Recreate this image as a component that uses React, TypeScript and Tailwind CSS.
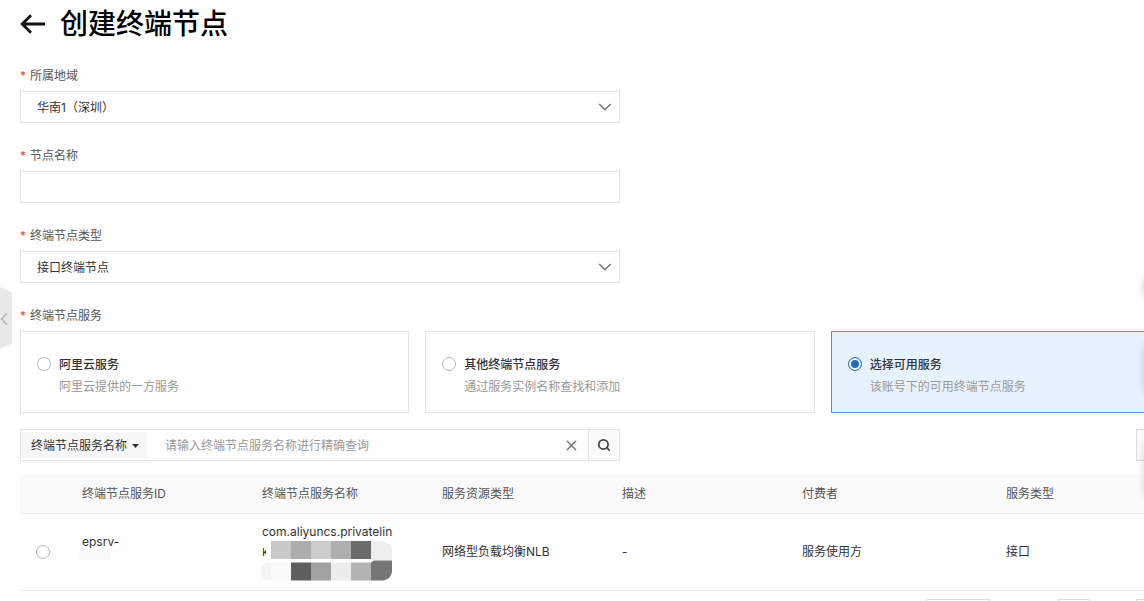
import React, { useState } from 'react';
import { Search, X } from 'lucide-react';

const services = [
    { id: 'aliyun', title: '阿里云服务', desc: '阿里云提供的一方服务' },
    { id: 'other', title: '其他终端节点服务', desc: '通过服务实例名称查找和添加' },
    { id: 'available', title: '选择可用服务', desc: '该账号下的可用终端节点服务' },
];

const radioClass = "appearance-none size-3.5 shrink-0 rounded-full border border-[#b5b5b5] bg-white checked:border-[#3a78c4] checked:bg-[#2468b8] checked:shadow-[inset_0_0_0_2px_#fff]";

function FieldLabel({ htmlFor, children }: { htmlFor?: string; children: React.ReactNode }) {
    return (
        <label htmlFor={htmlFor} className="flex h-5 items-center gap-1 text-[#555]">
            <span className="w-1.5 text-center text-[#c85050]">*</span>
            {children}
        </label>
    );
}

function SelectField({ id, label, option }: { id: string; label: string; option: string }) {
    return (
        <div className="flex flex-col gap-[5px]">
            <FieldLabel htmlFor={id}>{label}</FieldLabel>
            <div className="relative">
                <select id={id} className="block h-8 w-full appearance-none border border-[#e3e3e3] bg-white px-4 pt-0.5 text-[#333]">
                    <option>{option}</option>
                </select>
                <svg className="pointer-events-none absolute right-2 top-3 h-2 w-3.5" viewBox="0 0 14 8" fill="none" stroke="#777" strokeWidth="1.4">
                    <path d="M1.2 1 7 6.8 12.8 1" />
                </svg>
            </div>
        </div>
    );
}

// Pixelated cover over the private part of the service name
function Mosaic() {
    return (
        <svg className="absolute -left-0.5 top-[19px] h-10 w-33" viewBox="0 0 132 40">
            <path d="M2 0h9v7H2zM6 0h5v18H6z" fill="#fff" />
            <path d="M11 0h20v18H11z" fill="#c9c9c9" />
            <path d="M31 0h20v18H31z" fill="#adadad" />
            <path d="M51 0h20v18H51z" fill="#ccc" />
            <path d="M71 0h20v18H71z" fill="#afafaf" />
            <path d="M91 0h20v18H91z" fill="#6a6a6a" />
            <path d="M111 0h10q11 2 11 10v9h-21z" fill="#eee" />
            <path d="M11 21.500v18q-11 0-11-9t11-9z" fill="#f4f4f4" />
            <path d="M11 21.500h20v18H11z" fill="#fafafa" />
            <path d="M31 21.500h20v18H31z" fill="#5f5f5f" />
            <path d="M51 21.500h20v18H51z" fill="#a1a1a1" />
            <path d="M71 21.500h20v18H71z" fill="#ececec" />
            <path d="M91 21.500h20v18H91z" fill="#b3b3b3" />
            <path d="M111 21.500l3-2h18v11q-1 8-9 9h-12z" fill="#767676" />
        </svg>
    );
}

export default function App() {
    const [service, setService] = useState('available');
    const [name, setName] = useState('');
    const [keyword, setKeyword] = useState('');

    return (
        <div className="relative h-screen overflow-hidden bg-white pl-5 text-xs text-[#333] font-[Inter,'Noto_Sans_CJK_SC',sans-serif]">
            <header className="flex h-[66px] items-start gap-[15px] pt-1">
                <button type="button" aria-label="返回" className="flex h-10 items-center">
                    <svg className="h-5 w-[25px]" viewBox="0 0 25 20" fill="none" stroke="#111" strokeWidth="2.800">
                        <path d="M25 10H2.500M11 1.200 2.200 10l8.800 8.800" />
                    </svg>
                </button>
                <h1 className="text-[28px] leading-10 font-medium text-black">创建终端节点</h1>
            </header>

            <form>
                <div className="flex w-[600px] max-w-full flex-col gap-[23px]">
                    <SelectField id="region" label="所属地域" option="华南1（深圳）" />
                    <div className="flex flex-col gap-[5px]">
                        <FieldLabel htmlFor="name">节点名称</FieldLabel>
                        <input
                            id="name"
                            type="text"
                            value={name}
                            onChange={(e) => setName(e.target.value)}
                            className="h-8 w-full border border-[#e3e3e3] px-4 outline-none"
                        />
                    </div>
                    <SelectField id="type" label="终端节点类型" option="接口终端节点" />
                </div>

                {/* Everything below runs past the right edge of the window */}
                <div className="-mr-19 mt-[23px]">
                    <FieldLabel>终端节点服务</FieldLabel>
                    <div className="mt-[5px] grid grid-cols-3 gap-4">
                        {services.map((s) => (
                            <label
                                key={s.id}
                                className="flex gap-2 border border-[#e3e3e3] px-4 pt-[22px] pb-3.5 leading-[22px] has-checked:border-[#5b8cc8] has-checked:bg-[#e8f2fd]"
                            >
                                <input
                                    type="radio"
                                    name="service"
                                    checked={service === s.id}
                                    onChange={() => setService(s.id)}
                                    className={`${radioClass} mt-[3px]`}
                                />
                                <span className="flex flex-col">
                                    <span className="font-medium">{s.title}</span>
                                    <span className="text-[#999]">{s.desc}</span>
                                </span>
                            </label>
                        ))}
                    </div>

                    {/* Search */}
                    <div className="mt-4 flex justify-between">
                        <div className="flex h-8 w-[600px] border border-[#e3e3e3]">
                            <div className="relative my-0.5 ml-px w-[125px] bg-[#f7f7f7]">
                                <select aria-label="搜索字段" className="h-full w-full appearance-none pt-0.5 pl-[9px]">
                                    <option>终端节点服务名称</option>
                                </select>
                                <svg className="pointer-events-none absolute right-2 top-3 h-1 w-[7px]" viewBox="0 0 7 4" fill="#333">
                                    <path d="M0 0h7L3.500 4z" />
                                </svg>
                            </div>
                            <input
                                type="text"
                                aria-label="终端节点服务名称"
                                placeholder="请输入终端节点服务名称进行精确查询"
                                value={keyword}
                                onChange={(e) => setKeyword(e.target.value)}
                                className="min-w-0 flex-1 px-[18px] pt-0.5 outline-none placeholder:text-[#999]"
                            />
                            <button type="button" aria-label="清除" onClick={() => setKeyword('')} className="flex w-[34px] items-center justify-center">
                                <X size={17} strokeWidth={2} color="#777" />
                            </button>
                            <button type="button" aria-label="搜索" className="flex w-[31px] items-center justify-center border-l border-[#e3e3e3] bg-[#fafafa]">
                                <Search size={14} strokeWidth={3} color="#444" />
                            </button>
                        </div>
                        <div className="flex gap-2">
                            <button type="button" aria-label="刷新" className="h-8 w-[38px] border border-[#ddd] bg-[#fafafa]" />
                            <button type="button" aria-label="设置" className="h-8 w-[38px] border border-[#ddd] bg-[#fafafa]" />
                        </div>
                    </div>

                    <table className="mt-3.5 w-full table-fixed text-left leading-5">
                        <thead>
                            <tr className="h-[38px] border-b border-[#ebebeb] bg-[#fafafa] text-[#555]">
                                <th className="w-[46px]" />
                                <th className="w-[180px] px-4 font-normal">终端节点服务ID</th>
                                <th className="w-[180px] px-4 font-normal">终端节点服务名称</th>
                                <th className="w-[180px] px-4 font-normal">服务资源类型</th>
                                <th className="w-[180px] px-4 font-normal">描述</th>
                                <th className="w-[204px] px-4 font-normal">付费者</th>
                                <th className="px-4 font-normal">服务类型</th>
                            </tr>
                        </thead>
                        <tbody>
                            <tr className="border-b border-[#ebebeb]">
                                <td className="pl-4">
                                    <input type="radio" name="row" aria-label="epsrv-" className={`${radioClass} block`} />
                                </td>
                                <td className="px-4">
                                    epsrv-
                                    <div className="flex h-5">
                                        <span className="-ml-1 h-2 w-8 rounded-l bg-[#f9f9f9]" />
                                    </div>
                                </td>
                                <td className="px-4 py-2">
                                    <div className="relative h-15 whitespace-nowrap">
                                        com.aliyuncs.privatelin<br />k
                                        <Mosaic />
                                    </div>
                                </td>
                                <td className="px-4">网络型负载均衡NLB</td>
                                <td className="px-4">-</td>
                                <td className="px-4">服务使用方</td>
                                <td className="px-4">接口</td>
                            </tr>
                        </tbody>
                    </table>

                    {/* Pagination */}
                    <div className="mt-2 flex justify-end">
                        <button type="button" aria-label="每页显示" className="mr-[68px] h-8 w-16 border border-[#ddd]" />
                        <button type="button" aria-label="上一页" className="mr-[46px] h-8 w-8 border border-[#ddd]" />
                        <button type="button" aria-label="下一页" className="h-8 w-[84px] border border-[#ddd]" />
                    </div>
                </div>
            </form>

            {/* Sidebar handle */}
            <button type="button" aria-label="展开侧栏" className="absolute left-0 top-[287px]">
                <svg className="h-[62px] w-3" viewBox="0 0 12 62" fill="none">
                    <path d="M0 0 12 5.500v51L0 62z" fill="#e9e9e9" />
                    <path d="M7 26.500 1.500 32 7 37.500" stroke="#aaa" strokeWidth="1.200" />
                </svg>
            </button>

            {/* Floating tools, only their shadows reach into view */}
            <div className="absolute left-full top-[275px] h-6 w-10 rounded-full shadow-[0_0_8px_rgba(0,0,0,0.25)]" />
            <div className="absolute left-full top-[335px] h-[70px] w-10 rounded-full shadow-[0_0_8px_rgba(0,0,0,0.15)]" />
            <div className="absolute left-full top-[435px] h-[70px] w-10 rounded-full shadow-[0_0_8px_rgba(0,0,0,0.15)]" />
        </div>
    );
}
